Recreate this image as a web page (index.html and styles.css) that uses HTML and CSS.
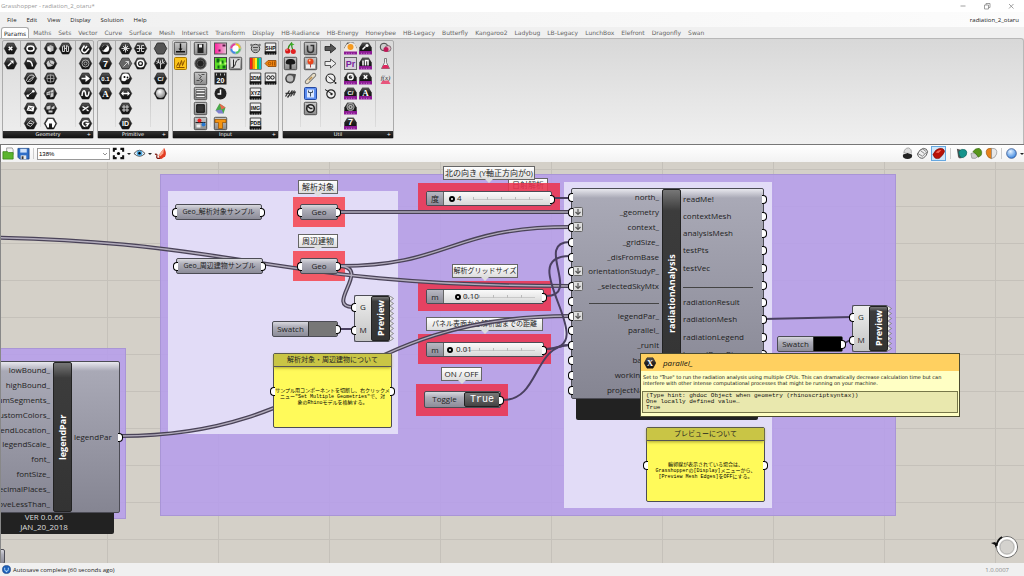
FILE: index.html
```html
<!DOCTYPE html>
<html lang="ja">
<head>
<meta charset="utf-8">
<title>Grasshopper - radiation_2_otaru*</title>
<link rel="stylesheet" href="styles.css">
</head>
<body>
<svg class="defs" aria-hidden="true">
  <defs>
    <linearGradient id="g-hex" x1="0" y1="0" x2="0" y2="1"><stop offset="0" stop-color="#5a5a5a"/><stop offset=".5" stop-color="#222"/><stop offset="1" stop-color="#111"/></linearGradient>
    <linearGradient id="g-box" x1="0" y1="0" x2="0" y2="1"><stop offset="0" stop-color="#c8c8c8"/><stop offset="1" stop-color="#8a8a8a"/></linearGradient>
    <linearGradient id="g-pink" x1="0" y1="0" x2="1" y2="0"><stop offset="0" stop-color="#ff1c9c"/><stop offset="1" stop-color="#e8c4d8"/></linearGradient>
    <radialGradient id="g-ball" cx=".4" cy=".3" r=".7"><stop offset="0" stop-color="#fff"/><stop offset="1" stop-color="#888"/></radialGradient>
    <radialGradient id="g-blue" cx=".4" cy=".3" r=".7"><stop offset="0" stop-color="#e8f4ff"/><stop offset="1" stop-color="#3a86e0"/></radialGradient>
    <symbol id="hex" viewBox="-7.5 -7.5 15 15"><path d="M-6.2 0-3.2-5.5H3.2L6.2 0 3.2 5.5H-3.2z" fill="url(#g-hex)" stroke="#1a1a1a" stroke-width=".6"/></symbol>
    <symbol id="box" viewBox="-7.5 -7.5 15 15"><rect x="-6.2" y="-6.2" width="12.4" height="12.4" rx="1" fill="url(#g-box)" stroke="#444" stroke-width=".9"/></symbol>
    <symbol id="chip" viewBox="-7.5 -7.5 15 15"><path d="M-5.3-5.5H5.3V5.5H-5.3z" fill="#eee" stroke="#333" stroke-width=".9"/><path d="M-5.7 2.8H5.7V6H4.500V5H3.300V6H2.100V5H.9V6H-.3V5H-1.500V6H-2.700V5H-3.900V6H-5.700z" fill="#111"/></symbol>
    <symbol id="dome" viewBox="-7.5 -7.5 15 15"><path d="M-6.200 3V-1L-3.200-6H3.200L6.200-1V3z" fill="url(#g-hex)"/><path d="M-6.500 2.500H6.500V6H-6.500z" fill="#8c1a94"/><path d="M-4 4.200V6M-1.500 4.200V6M1 4.200V6M3.500 4.200V6" stroke="#d58bdc" stroke-width=".6"/></symbol>
  </defs>
</svg>

<header class="titlebar">
  <span class="title">Grasshopper - radiation_2_otaru*</span>
  <div class="window-buttons">
    <button aria-label="Minimize"><svg class="ic" viewBox="0 0 10 10"><path d="M2.500 5H7.500"/></svg></button>
    <button aria-label="Restore"><svg class="ic" viewBox="0 0 10 10"><path d="M2.500 4H6.500V8H2.500zM4 4V2.500H8V6.500H6.500"/></svg></button>
    <button aria-label="Close"><svg class="ic" viewBox="0 0 10 10"><path d="M3 3 7.500 7.500M7.500 3 3 7.500"/></svg></button>
  </div>
</header>

<nav class="menubar">
  <button>File</button><button>Edit</button><button>View</button><button>Display</button><button>Solution</button><button>Help</button>
  <span class="docname">radiation_2_otaru</span>
</nav>

<div class="tabs" role="tablist">
  <button class="active" role="tab">Params</button><button role="tab">Maths</button><button role="tab">Sets</button><button role="tab">Vector</button><button role="tab">Curve</button><button role="tab">Surface</button><button role="tab">Mesh</button><button role="tab">Intersect</button><button role="tab">Transform</button><button role="tab">Display</button><button role="tab">HB-Radiance</button><button role="tab">HB-Energy</button><button role="tab">Honeybee</button><button role="tab">HB-Legacy</button><button role="tab">Butterfly</button><button role="tab">Kangaroo2</button><button role="tab">Ladybug</button><button role="tab">LB-Legacy</button><button role="tab">LunchBox</button><button role="tab">Elefront</button><button role="tab">Dragonfly</button><button role="tab">Swan</button>
</div>

<section class="ribbon">
  <section class="panel">
    <div class="tools">
      <div class="group">
        <button aria-label="Point"><svg viewBox="-7.5 -7.5 15 15"><use href="#hex" x="-7.5" y="-7.5" width="15" height="15"/><path class="s" d="M-1.800-1.800 1.800 1.800M1.800-1.800-1.800 1.800"/></svg></button>
        <button aria-label="Vector"><svg viewBox="-7.5 -7.5 15 15"><use href="#hex" x="-7.5" y="-7.5" width="15" height="15"/><path class="s" d="M-2.500 2.500 1 -1"/><path class="w" d="M3-3V.6L-.6-3z"/></svg></button>
      </div>
      <div class="group">
        <button aria-label="Circle"><svg viewBox="-7.5 -7.5 15 15"><use href="#hex" x="-7.5" y="-7.5" width="15" height="15"/><ellipse class="s" rx="3.500" ry="2.600"/></svg></button>
        <button aria-label="Arc"><svg viewBox="-7.5 -7.5 15 15"><use href="#hex" x="-7.5" y="-7.5" width="15" height="15"/><path class="s" d="M-3-2.500C0-3 1.500-1 2 3"/><path class="s" d="M-3.500-2.500H-2"/></svg></button>
        <button aria-label="Curve"><svg viewBox="-7.5 -7.5 15 15"><use href="#hex" x="-7.5" y="-7.5" width="15" height="15"/><path class="t" d="M-4 2C-2-5 3-4 4-2 1 0 3 3-3 3zM-2 2 3-2"/></svg></button>
        <button aria-label="Line"><svg viewBox="-7.5 -7.5 15 15"><use href="#hex" x="-7.5" y="-7.5" width="15" height="15"/><path class="t" d="M-2.500 2 2.500-2"/><circle class="w" cx="-2.800" cy="2.200" r="1.300"/><circle class="w" cx="2.800" cy="-2.200" r="1.300"/></svg></button>
        <button aria-label="Plane"><svg viewBox="-7.5 -7.5 15 15"><use href="#hex" x="-7.5" y="-7.5" width="15" height="15"/><path class="w" d="M-4 2-2-3 4-2 3 3z"/><path d="M-2 1 2-1M-1-1.500 1 1.500" stroke="#333" stroke-width=".8"/></svg></button>
        <button aria-label="Rectangle"><svg viewBox="-7.5 -7.5 15 15"><use href="#hex" x="-7.5" y="-7.5" width="15" height="15"/><path class="t" d="M-3.500 1 0-3 3.500-1 0 3zM-1.500 0 1.500 0"/></svg></button>
      </div>
      <div class="group">
        <button aria-label="Box"><svg viewBox="-7.5 -7.5 15 15"><use href="#hex" x="-7.5" y="-7.5" width="15" height="15"/><path fill="#bbb" d="M-3-2 0-3.500 3-2V2L0 3.500-3 2z"/><path fill="#eee" d="M-3-2 0-.5V3.500L-3 2z"/></svg></button>
        <button aria-label="Brep"><svg viewBox="-7.5 -7.5 15 15"><use href="#hex" x="-7.5" y="-7.5" width="15" height="15"/><path fill="#ccc" d="M-4 0C-3-4 2-4 4-1 3 3-1 4-3 3z"/><path d="M-1-3C-1 0 0 1 3 1" fill="none" stroke="#555"/></svg></button>
        <button aria-label="Mesh"><svg viewBox="-7.5 -7.5 15 15"><use href="#hex" x="-7.5" y="-7.5" width="15" height="15"/><path d="M-3-3Q0-4 3-3 4 0 3 3 0 4-3 3-4 0-3-3zM0-4V4M-4 0H4" fill="none" stroke="#aaa" stroke-width=".8"/></svg></button>
        <button aria-label="Surface"><svg viewBox="-7.5 -7.5 15 15"><use href="#hex" x="-7.5" y="-7.5" width="15" height="15"/><path fill="#ccc" d="M-4-1 3-4V3L0 4-1 1-4 2z"/><path d="M0-2V3M-3 0 3-1" stroke="#555" stroke-width=".7"/></svg></button>
        <button aria-label="Twisted Box"><svg viewBox="-7.5 -7.5 15 15"><use href="#hex" x="-7.5" y="-7.5" width="15" height="15"/><path fill="#ccc" d="M-4-2 0-3V0L-1 1-4 1zM1-1 4-3V0L1 1zM-2 2H2V4H-2z"/></svg></button>
        <button aria-label="Geometry"><svg viewBox="-7.5 -7.5 15 15"><use href="#hex" x="-7.5" y="-7.5" width="15" height="15"/><path class="w" d="M-5 0-2-4.500H2L5 0 3 4H1.500V0H-1.500V4H-3z"/></svg></button>
        <button aria-label="Group"><svg viewBox="-7.5 -7.5 15 15"><use href="#hex" x="-7.5" y="-7.5" width="15" height="15"/><path class="t" d="M-3 3V-2L-1-3V3M1 3V-3L3-2V3M-3 3H-1M1 3H3M-1 0H1"/></svg></button>
      </div>
      <div class="group">
        <button aria-label="Pipeline"><svg viewBox="-7.5 -7.5 15 15"><use href="#hex" x="-7.5" y="-7.5" width="15" height="15"/><path class="s" d="M-1-3-3 0A2.500 2.500 0 0 0 1 3L3.500 0M-.5 0 1.500-2.500"/></svg></button>
        <button aria-label="Spiral"><svg viewBox="-7.5 -7.5 15 15"><use href="#hex" x="-7.5" y="-7.5" width="15" height="15"/><circle r="3.500" fill="none" stroke="#aaa"/><circle r="1.500" fill="none" stroke="#aaa"/></svg></button>
        <button aria-label="Transform"><svg viewBox="-7.5 -7.5 15 15"><use href="#hex" x="-7.5" y="-7.5" width="15" height="15"/><path class="s" d="M-4 0H3"/><path class="w" d="M0-3.500 4.500 0 0 3.500z"/></svg></button>
        <button aria-label="Field"><svg viewBox="-7.5 -7.5 15 15"><use href="#hex" x="-7.5" y="-7.5" width="15" height="15"/><path class="s" d="M-3.500 2.500C-3-5 0-3 0 0S3 5 3.500-2"/></svg></button>
        <button aria-label="Cloud"><svg viewBox="-7.5 -7.5 15 15"><use href="#hex" x="-7.5" y="-7.5" width="15" height="15"/><path class="s" d="M-3-2 0 0-3 2M0 0 3-2M1 1 3 2.500"/></svg></button>
        <button aria-label="Settings"><svg viewBox="-7.5 -7.5 15 15"><use href="#hex" x="-7.5" y="-7.5" width="15" height="15"/><path class="s" d="M3-2C0-4-3-2-3 0S-1 3 0 3M0 0H3L1 3"/></svg></button>
      </div>
    </div>
    <h2>Geometry<span>+</span></h2>
  </section>

  <section class="panel">
    <div class="tools">
      <div class="group">
        <button aria-label="Boolean"><svg viewBox="-7.5 -7.5 15 15"><use href="#hex" x="-7.5" y="-7.5" width="15" height="15"/><circle class="w" r="3.600"/><path d="M-2.500 2.500A3 3 0 0 1 2-2.500z" fill="#222"/></svg></button>
        <button aria-label="Integer"><svg viewBox="-7.5 -7.5 15 15"><use href="#hex" x="-7.5" y="-7.5" width="15" height="15"/><text class="g" y="3">7</text></svg></button>
        <button aria-label="Number"><svg viewBox="-7.5 -7.5 15 15"><use href="#hex" x="-7.5" y="-7.5" width="15" height="15"/><text class="g small" y="2.500">0.1</text></svg></button>
        <button aria-label="Text"><svg viewBox="-7.5 -7.5 15 15"><use href="#hex" x="-7.5" y="-7.5" width="15" height="15"/><text class="g serif" y="3.300">A</text></svg></button>
      </div>
      <div class="group">
        <button aria-label="Colour"><svg viewBox="-7.5 -7.5 15 15"><use href="#hex" x="-7.5" y="-7.5" width="15" height="15"/><circle class="w" r="2"/><path class="t" d="M0-4V4M-4 0H4M-2.500-2.500 2.500 2.500M2.500-2.500-2.500 2.500"/></svg></button>
        <button aria-label="Domain"><svg viewBox="-7.5 -7.5 15 15"><use href="#hex" x="-7.5" y="-7.5" width="15" height="15"/><path d="M-6 0-3-5H3L6 0 3 5H-3z" fill="#666"/><path class="t" d="M-2 3 3-2M0-2H3V1"/></svg></button>
        <button aria-label="Matrix"><svg viewBox="-7.5 -7.5 15 15"><use href="#hex" x="-7.5" y="-7.5" width="15" height="15"/><path class="w" d="M-4-1A4 4 0 0 1 4-1 3 3 0 0 1 1 1Q0 4-4 2z"/><circle cx="-1" cy="-1.500" r="1"/><circle cx="2" cy="-1" r=".9"/></svg></button>
        <button aria-label="Range"><svg viewBox="-7.5 -7.5 15 15"><use href="#hex" x="-7.5" y="-7.5" width="15" height="15"/><path class="s" d="M-3 0H3"/><path class="w" d="M-4.500 0-2-2.500V2.500zM4.500 0 2-2.500V2.500z"/></svg></button>
        <button aria-label="Grid"><svg viewBox="-7.5 -7.5 15 15"><use href="#hex" x="-7.5" y="-7.5" width="15" height="15"/><path class="t" d="M-1.500-3.500V3.500M1.500-3.500V3.500M-3.500-1.500H3.500M-3.500 1.500H3.500"/></svg></button>
        <button aria-label="Guid"><svg viewBox="-7.5 -7.5 15 15"><use href="#hex" x="-7.5" y="-7.5" width="15" height="15"/><text class="g medium" y="2.800">ID</text></svg></button>
        <button aria-label="Table"><svg viewBox="-7.5 -7.5 15 15"><use href="#hex" x="-7.5" y="-7.5" width="15" height="15"/><path class="t" d="M-3.500-3H-1V3H-3.500M3.500-3H1V3H3.500M-4 0H4"/></svg></button>
        <button aria-label="Time"><svg viewBox="-7.5 -7.5 15 15"><use href="#hex" x="-7.5" y="-7.5" width="15" height="15"/><circle class="s" r="3.300"/><circle class="w" r="1.200"/></svg></button>
      </div>
      <div class="group">
        <button aria-label="Data"><svg viewBox="-7.5 -7.5 15 15"><path d="M-6.200 0-3.200-5.500H3.200L6.200 0 3.200 5.500H-3.200z" fill="#555" stroke="#333"/></svg></button>
        <button aria-label="Data Path"><svg viewBox="-7.5 -7.5 15 15"><use href="#hex" x="-7.5" y="-7.5" width="15" height="15"/><path class="t" d="M0 5V0L-4-2M0 1 4-2M-2-1V-4M2-1V-4M-4 0-2-1M4 0 2-1M0 0V-3"/></svg></button>
        <button aria-label="File Path"><svg viewBox="-7.5 -7.5 15 15"><use href="#hex" x="-7.5" y="-7.5" width="15" height="15"/><text class="g small" y="2.500">C/</text></svg></button>
        <button aria-label="Shader"><svg viewBox="-7.5 -7.5 15 15"><use href="#hex" x="-7.5" y="-7.5" width="15" height="15"/><circle r="4.600" fill="url(#g-ball)"/></svg></button>
      </div>
    </div>
    <h2>Primitive<span>+</span></h2>
  </section>

  <section class="panel">
    <div class="tools">
      <div class="group">
        <button aria-label="Button"><svg viewBox="-7.5 -7.5 15 15"><use href="#box" x="-7.5" y="-7.5" width="15" height="15"/><path d="M-.7-5H.7V0H2L0 2.500-2 0H-.7zM-4.500 2.500H4.500V4H-4.500z" fill="#111"/></svg></button>
        <button aria-label="Graph Mapper"><svg viewBox="-7.5 -7.5 15 15"><rect x="-6" y="-6" width="12" height="12" rx="1" fill="#fcc419" stroke="#a97800"/><path d="M-4 3-2-1-1 3 1-3 2 2 4-3M-4 4H4" fill="none" stroke="#8a5200"/></svg></button>
      </div>
      <div class="group">
        <button aria-label="Boolean Toggle"><svg viewBox="-7.5 -7.5 15 15"><use href="#box" x="-7.5" y="-7.5" width="15" height="15"/><path d="M-3-4.500H3V4.500H-3z" fill="#222"/><path d="M-1.500-4H1.500V-1H-1.500z" fill="#eee"/></svg></button>
        <button aria-label="Control Knob"><svg viewBox="-7.5 -7.5 15 15"><circle r="5.700" fill="#333" stroke="#777"/><circle r="3.500" fill="#222" stroke="#555"/></svg></button>
        <button aria-label="Digit Scroller"><svg viewBox="-7.5 -7.5 15 15"><use href="#box" x="-7.5" y="-7.5" width="15" height="15"/><path d="M-2-4 1-2-1 0 2 2 0 4M-4 2H-1M1-4H4" fill="none" stroke="#333" stroke-width=".8"/></svg></button>
        <button aria-label="Value List"><svg viewBox="-7.5 -7.5 15 15"><use href="#box" x="-7.5" y="-7.5" width="15" height="15"/><path d="M-4.500-4H4.500V-2H-4.500zM-4.500-1H4.500V1H-4.500zM-4.500 2H4.500V4H-4.500z" fill="#eee" stroke="#333" stroke-width=".6"/></svg></button>
        <button aria-label="MD Slider"><svg viewBox="-7.5 -7.5 15 15"><use href="#box" x="-7.5" y="-7.5" width="15" height="15"/><path d="M-3.800-3.800H3.800V3.800H-3.800z" fill="#333" stroke="#111"/></svg></button>
        <button aria-label="Number Slider"><svg viewBox="-7.5 -7.5 15 15"><use href="#box" x="-7.5" y="-7.5" width="15" height="15"/><path d="M-5-1H5" stroke="#222"/><circle cx="-1" cy="-3" r="2" fill="#e22"/><circle cx="3" cy="1" r="2" fill="#2878d0"/><path d="M-4 1H0V4H-4z" fill="#eee"/></svg></button>
      </div>
      <div class="group">
        <button aria-label="Gradient"><svg viewBox="-7.5 -7.5 15 15"><rect x="-6" y="-5.500" width="12" height="11" fill="url(#g-pink)" stroke="#555"/><path d="M2-4H5V-2H2zM-2 1H0V3H-2z" fill="#5b1848"/></svg></button>
        <button aria-label="Image Sampler"><svg viewBox="-7.5 -7.5 15 15"><rect x="-6" y="-6" width="12" height="12" fill="#5cdc28" stroke="#444"/><path d="M-4-5H-1V-1H-4zM1-3H3V0H1zM-3 2H-1V5H-3zM2 2H5V5H2z" fill="#0c6a12"/><path d="M-1-2H1V1H-1zM4-1H6V1H4z" fill="#c8ff80"/></svg></button>
        <button aria-label="Calendar"><svg viewBox="-7.5 -7.5 15 15"><rect x="-6" y="-6" width="12" height="12" fill="#222"/><path d="M-4-5V-3M0-5V-3M4-5V-3" stroke="#bbb"/><text class="g medium" y="4.500">20</text></svg></button>
        <button aria-label="Clock"><svg viewBox="-7.5 -7.5 15 15"><circle r="6" fill="#222"/><path class="s" d="M0-4V0.500H-3"/></svg></button>
        <button aria-label="Colour Picker"><svg viewBox="-7.5 -7.5 15 15"><path d="M-5 2-1-5 5-1 3 5z" fill="#4aa84a"/><path d="M-1-5 5-1 1 1z" fill="#e86a50"/><path d="M-5 2 1 1 3 5-2 5z" fill="#8080d0"/></svg></button>
        <button aria-label="Panel"><svg viewBox="-7.5 -7.5 15 15"><use href="#box" x="-7.5" y="-7.5" width="15" height="15"/><path d="M-5.500-4H5.500V-1H2V5H-2V-1H-5.500z" fill="#f59410" stroke="#9a5200" stroke-width=".7"/></svg></button>
        <button aria-label="Colour Wheel"><svg viewBox="-7.5 -7.5 15 15"><circle r="5.400" fill="#fff" stroke="#777" stroke-width=".6"/><g fill="none" stroke-width="2"><path d="M0-4.200A4.200 4.200 0 0 1 4.200 0" stroke="#f0c020"/><path d="M4.200 0A4.200 4.200 0 0 1 0 4.200" stroke="#4cc860"/><path d="M0 4.200A4.200 4.200 0 0 1-4.200 0" stroke="#4088e8"/><path d="M-4.200 0A4.200 4.200 0 0 1 0-4.200" stroke="#e040a0"/></g></svg></button>
        <button aria-label="Graph"><svg viewBox="-7.5 -7.5 15 15"><use href="#box" x="-7.5" y="-7.5" width="15" height="15"/><path d="M-4.500-4.500H4.500V4.500H-4.500z" fill="#ddd"/><path d="M-4 4C2 4-2-4 4-4M-2-4V4" fill="none" stroke="#222"/></svg></button>
      </div>
      <div class="group">
        <button aria-label="Atom"><svg viewBox="-7.5 -7.5 15 15"><circle r="4.200" fill="#bbb" stroke="#444"/><circle cx="-4" cy="-3.500" r="1.300" fill="#777"/><circle cx="4" cy="-3.500" r="1.300" fill="#777"/><path d="M-2.500-1H2.500M-2 1.500H2" stroke="#333" stroke-width=".8"/></svg></button>
        <button aria-label="Palette"><svg viewBox="-7.5 -7.5 15 15"><path d="M-6-6H6V6H-6z" fill="#222"/><path d="M-5.500-5.500H-3V5.500H-5.500z" fill="#e22"/><path d="M-3-5.500H-.5V5.500H-3z" fill="#f90"/><path d="M-.5-5.500H1.500V5.500H-.5z" fill="#fe2"/><path d="M1.500-5.500H3.500V5.500H1.500z" fill="#2b4"/><path d="M3.500-5.500H5.500V5.500H3.500z" fill="#1bc"/></svg></button>
        <button aria-label="Import 3DM"><svg viewBox="-7.5 -7.5 15 15"><use href="#chip" x="-7.5" y="-7.5" width="15" height="15"/><text class="c" y="1">3DM</text></svg></button>
        <button aria-label="Import Coordinates"><svg viewBox="-7.5 -7.5 15 15"><use href="#chip" x="-7.5" y="-7.5" width="15" height="15"/><text class="c" y="1">XYZ</text></svg></button>
        <button aria-label="Import Image"><svg viewBox="-7.5 -7.5 15 15"><use href="#chip" x="-7.5" y="-7.5" width="15" height="15"/><text class="c" y="1">IMG</text></svg></button>
        <button aria-label="Import PDB"><svg viewBox="-7.5 -7.5 15 15"><use href="#chip" x="-7.5" y="-7.5" width="15" height="15"/><text class="c" y="1">PDB</text></svg></button>
        <button aria-label="Import SHP"><svg viewBox="-7.5 -7.5 15 15"><use href="#chip" x="-7.5" y="-7.5" width="15" height="15"/><text class="c" y="1">SHP</text></svg></button>
        <button aria-label="Tag"><svg viewBox="-7.5 -7.5 15 15"><path d="M-5.500 0-2.500-3H5.500V3H-2.500z" fill="#f08410" stroke="#8a4200" stroke-width=".8"/><circle cx="-1" r="1.300" fill="none" stroke="#8a4200" stroke-width=".7"/><path d="M2-2V2M4-2V2" stroke="#8a4200" stroke-width=".7"/></svg></button>
        <button aria-label="Read File"><svg viewBox="-7.5 -7.5 15 15"><use href="#chip" x="-7.5" y="-7.5" width="15" height="15"/><circle cx="-2" cy="-1" r="1.700" fill="none" stroke="#111"/><circle cx="2" cy="-1" r="1.700" fill="none" stroke="#111"/></svg></button>
      </div>
    </div>
    <h2>Input<span>+</span></h2>
  </section>

  <section class="panel">
    <div class="tools">
      <div class="group">
        <button aria-label="Cherry Picker"><svg viewBox="-7.5 -7.5 15 15"><path d="M-2.500 1Q-2-3 1-5.500 1-1 2.500 2" fill="none" stroke="#2f8a1d" stroke-width="1.200"/><path d="M1-5.500 4-4 0-2.500z" fill="#3eb427"/><circle cx="-2.800" cy="2.500" r="2.600" fill="#d81818"/><circle cx="2.800" cy="3" r="2.500" fill="#e22222"/><circle cx="-3.500" cy="1.500" r=".8" fill="#fbb"/></svg></button>
        <button aria-label="Param Viewer"><svg viewBox="-7.5 -7.5 15 15"><use href="#box" x="-7.5" y="-7.5" width="15" height="15"/><path d="M-1 5.500V1Q-6 1-4.500-2-4-5 0-4.500 4-5 4.500-2 6 1 1 1V5.500z" fill="#181818"/></svg></button>
        <button aria-label="Fitness Landscape"><svg viewBox="-7.5 -7.5 15 15"><path d="M-5 0Q-4-5 0-4.500L5-4 4 1Q3 5-1 4.500-5 4-5 0z" fill="#555" stroke="#222" stroke-width=".6"/><circle cx="-.5" r="3.200" fill="#bbb"/></svg></button>
        <button aria-label="Galapagos"><svg viewBox="-7.5 -7.5 15 15"><path d="M-5 3-1-3M-3 4 2-3M0 3 4-3M3 2 5-2M-5 0 5-1" stroke="#333" stroke-width="1.300"/></svg></button>
      </div>
      <div class="group">
        <button aria-label="Data Recorder"><svg viewBox="-7.5 -7.5 15 15"><use href="#box" x="-7.5" y="-7.5" width="15" height="15"/><path d="M-3-3V1A3 3 0 0 0 3 1V-3H0" fill="none" stroke="#333" stroke-width="1.600"/></svg></button>
        <button aria-label="Record"><svg viewBox="-7.5 -7.5 15 15"><use href="#box" x="-7.5" y="-7.5" width="15" height="15"/><path d="M-4.500 1H4.500V5H-4.500z" fill="#eee"/><path d="M0 0V4" stroke="#a44"/><circle cy="-2" r="3" fill="#e8451c"/><circle cx="-.8" cy="-3" r=".9" fill="#fc9"/></svg></button>
        <button aria-label="Relay"><svg viewBox="-7.5 -7.5 15 15"><path d="M-3.500 3.500 3.500-3.500" stroke="#555" stroke-width="4.400" stroke-linecap="round"/><path d="M-3.500 3.500 3.500-3.500" stroke="#e6dcc6" stroke-width="3" stroke-linecap="round"/><path d="M-1.500 1.500 1.500-1.500" stroke="#b98b4a" stroke-width="1.500"/></svg></button>
        <button aria-label="Suirify"><svg viewBox="-7.5 -7.5 15 15"><rect x="-6" y="-6" width="12" height="12" rx="1" fill="#5c8ef0" stroke="#2448a0"/><path d="M-3.500-4H3.500V4H-3.500z" fill="#dce8ff"/><path d="M-2-3V-1H2V-3M0-1V3" fill="none" stroke="#456"/></svg></button>
        <button aria-label="Timer"><svg viewBox="-7.5 -7.5 15 15"><use href="#box" x="-7.5" y="-7.5" width="15" height="15"/><circle r="3.800" fill="#ddd" stroke="#222" stroke-width="1.600"/><path d="M-4-3 0 0H2" fill="none" stroke="#222" stroke-width="1.300"/></svg></button>
      </div>
      <div class="group">
        <button aria-label="Data Output"><svg viewBox="-7.5 -7.5 15 15"><path d="M-5.500-2H0V-4.500L5.500 0 0 4.500V2H-5.500z" fill="#555" stroke="#222" stroke-width=".8"/></svg></button>
        <button aria-label="Data Input"><svg viewBox="-7.5 -7.5 15 15"><path d="M-5.500-2H0V-4.500L5.500 0 0 4.500V2H-5.500z" fill="#eee" stroke="#444" stroke-width=".9"/></svg></button>
        <button aria-label="Jump"><svg viewBox="-7.5 -7.5 15 15"><circle r="4.500" fill="#eee" stroke="#222" stroke-width="1.200"/><path d="M-2-2 5 4" stroke="#222"/><circle cx="5" cy="4.500" r="1" fill="#222"/></svg></button>
        <button aria-label="Trigger"><svg viewBox="-7.5 -7.5 15 15"><circle cx=".5" cy=".5" r="4.200" fill="#eee" stroke="#222" stroke-width="1.200"/><path d="M-5.500-4 1 0" stroke="#222"/><circle cx="1" cy=".5" r="1.200" fill="#222"/></svg></button>
      </div>
      <div class="group">
        <button aria-label="Sun"><svg viewBox="-7.5 -7.5 15 15"><use href="#dome" x="-7.5" y="-7.5" width="15" height="15"/><path d="M-6.500 3V0L-4-4 0-6 4-5 6.500 0V3z" fill="#efe8e0"/><circle cy="-1.500" r="3" fill="#f59a20"/></svg></button>
        <button aria-label="Premium"><svg viewBox="-7.5 -7.5 15 15"><rect x="-6" y="-6" width="12" height="12" fill="#d8d0dc" stroke="#666"/><text class="g pr" y="3.500">Pr</text></svg></button>
        <button aria-label="Get Boolean"><svg viewBox="-7.5 -7.5 15 15"><use href="#dome" x="-7.5" y="-7.5" width="15" height="15"/><circle class="s" cy="-1.500" r="2.600"/><path class="t" d="M0-1.500 2-3"/></svg></button>
        <button aria-label="Get Path"><svg viewBox="-7.5 -7.5 15 15"><use href="#dome" x="-7.5" y="-7.5" width="15" height="15"/><text class="g small" y="1.500">C/</text></svg></button>
        <button aria-label="Get Time"><svg viewBox="-7.5 -7.5 15 15"><use href="#dome" x="-7.5" y="-7.5" width="15" height="15"/><circle cy="-1.500" r="3.600" fill="#555" stroke="#aaa"/><circle class="t" cy="-1.500" r="1.600"/></svg></button>
        <button aria-label="Get Integer"><svg viewBox="-7.5 -7.5 15 15"><use href="#dome" x="-7.5" y="-7.5" width="15" height="15"/><text class="g" y="1.800">7</text></svg></button>
        <button aria-label="Get Vector"><svg viewBox="-7.5 -7.5 15 15"><use href="#dome" x="-7.5" y="-7.5" width="15" height="15"/><path class="s" d="M-3 1 0-2"/><circle class="w" cx="1.500" cy="-3" r="1.600"/></svg></button>
        <button aria-label="Get Number"><svg viewBox="-7.5 -7.5 15 15"><use href="#dome" x="-7.5" y="-7.5" width="15" height="15"/><path class="s" d="M-2.500 2V-3M0 2V-3H2.500V2"/></svg></button>
        <button aria-label="Get Point"><svg viewBox="-7.5 -7.5 15 15"><use href="#dome" x="-7.5" y="-7.5" width="15" height="15"/><path class="s" d="M-1.800-3.300 1.800.3M1.800-3.300-1.800.3"/></svg></button>
        <button aria-label="Get Text"><svg viewBox="-7.5 -7.5 15 15"><use href="#dome" x="-7.5" y="-7.5" width="15" height="15"/><text class="g serif" y="2">A</text></svg></button>
      </div>
      <div class="group">
        <button aria-label="Cluster"><svg viewBox="-7.5 -7.5 15 15"><circle cx="-1.500" cy="-1.500" r="3.800" fill="#ccc" stroke="#444"/><circle cx="2.500" cy="0" r="3" fill="#e8b0c4" stroke="#555" stroke-width=".7"/><circle cx=".5" cy="1" r="2.500" fill="#c01858"/></svg></button>
        <button aria-label="Experiment"><svg viewBox="-7.5 -7.5 15 15"><path d="M-1-5H1V-1L4 5H-4L-1-1z" fill="#eee" stroke="#666" stroke-width=".8"/><path d="M-2 1.500H2L4 5H-4z" fill="#e02860"/></svg></button>
        <button aria-label="Expression"><svg viewBox="-7.5 -7.5 15 15"><path d="M-3 2H3L5 5.500H-5z" fill="#e8557c"/><text class="fx" y="1">f(x)</text></svg></button>
      </div>
    </div>
    <h2>Util<span>+</span></h2>
  </section>
</section>

<div class="toolbar">
  <button aria-label="Open"><svg class="ic" viewBox="0 0 14 14"><path d="M5 1H11L12 3V8H5z" fill="#f4f4f4" stroke="#777" stroke-width=".7"/><path d="M1 5H6L7 6H12V13H1z" fill="#5cb52e" stroke="#358012" stroke-width=".8"/></svg></button>
  <button aria-label="Save"><svg class="ic" viewBox="0 0 14 14"><path d="M1 1.500H13V13H3L1 11z" fill="#2f6fc8" stroke="#17407f" stroke-width=".8"/><path d="M3.500 2H10.500V6H3.500z" fill="#cfe2fb"/><path d="M4 9H10V13H4z" fill="#e8e8e8"/><path d="M5 10H7V13H5z" fill="#333"/></svg></button>
  <i class="sep tight"></i>
  <select aria-label="Zoom"><option>138%</option></select>
  <button class="fit" aria-label="Zoom extents"><svg class="ic" viewBox="0 0 14 14"><path d="M2 5V2H5M9 2H12V5M12 9V12H9M5 12H2V9" fill="none" stroke="#111" stroke-width="2.200"/><circle cx="7" cy="7" r="1.700"/></svg></button>
  <i class="caret"></i>
  <button aria-label="Preview"><svg class="ic" viewBox="0 0 14 14"><path d="M1 7Q7 0 13 7 7 13 1 7z" fill="#eaf6ff" stroke="#444"/><circle cx="7" cy="6.800" r="3" fill="#4da6dd"/><circle cx="7" cy="6.800" r="1.300"/></svg></button>
  <i class="caret"></i>
  <button aria-label="Sketch"><svg class="ic" viewBox="0 0 14 14"><path d="M5 9 11 1Q14 7 12 10L8 13 6 12z" fill="#e23c22"/><path d="M5 9 11 1 10 7 7 10z" fill="#f9a58a"/><path d="M1 8Q4 7 3 10 2 13 7 12" fill="none" stroke="#7c1a10" stroke-width="1.300"/></svg></button>
  <span class="spring"></span>
  <button aria-label="No preview"><svg class="ic" viewBox="0 0 14 14"><path d="M3 6Q4 1 8 1 12 2 11 7z" fill="#ddd" stroke="#888" stroke-width=".7"/><ellipse cx="7" cy="9.500" rx="5" ry="3.400" fill="#222"/><path d="M2.500 7.500Q7 4.500 11.500 7.500" stroke="#eee" fill="none"/></svg></button>
  <button aria-label="Wireframe preview"><svg class="ic" viewBox="0 0 14 14"><path d="M1.500 7.500Q4 2 8 1.500 12 1.500 12.500 5 12 9 8 12 3 13 1.500 7.500z" fill="#eee" stroke="#555"/><path d="M2 7 7 10 12 5M5 4 9 7M7 2 11 5" fill="none" stroke="#666" stroke-width=".8"/></svg></button>
  <button class="on" aria-label="Shaded preview"><svg class="ic" viewBox="0 0 14 14"><path d="M1 8Q4 2 8 1.500 13 1 13.500 5 12 9 8 12 3 14 1 8z" fill="#b81208" stroke="#6c0500" stroke-width=".6"/><path d="M4 6Q7 2.500 10 3.500L7 6.500z" fill="#f0685a"/></svg></button>
  <i class="sep"></i>
  <button aria-label="Preview selected"><svg class="ic" viewBox="0 0 14 14"><path d="M2 2 6 3 7 12Q3 13 3 8z" fill="#555"/><path d="M4 5Q7 1 11 3 14 5 12 9 9 13 6 11 4 9 4 5z" fill="#15948c" stroke="#075650" stroke-width=".6"/></svg></button>
  <button aria-label="Preview mesh"><svg class="ic" viewBox="0 0 14 14"><path d="M1 7Q5 5 9 10 6 13.500 2 12z" fill="#ccc" stroke="#777" stroke-width=".6"/><path d="M3 5Q6 1 10 1.500 14 4 12 9L9 11Q7 7 3 5z" fill="#57961a" stroke="#2c5c08" stroke-width=".6"/></svg></button>
  <button aria-label="Document preview settings"><svg class="ic" viewBox="0 0 14 14"><path d="M7 1.500Q0 1 1.500 7.500 3 12 7 12.500z" fill="#e8821a" stroke="#8a4a08" stroke-width=".6"/><path d="M7 1.500Q14 1 12.500 7.500 11 12 7 12.500z" fill="#e8e8e8" stroke="#777" stroke-width=".6"/></svg></button>
  <i class="sep tight"></i>
  <button aria-label="Preview quality"><svg class="ic" viewBox="0 0 14 14"><circle cx="7" cy="7" r="5.200" fill="url(#g-blue)" stroke="#2a4a88" stroke-width=".8"/></svg></button>
  <i class="caret"></i>
</div>

<main class="canvas">
  <div class="area outer a-left"></div>
  <div class="area outer a-main"></div>
  <div class="area inner a-geo"></div>
  <div class="area inner a-rad"></div>

  <div class="balloon b-sun">日射解析</div>
  <div class="area red r-geo1"></div>
  <div class="area red r-geo2"></div>
  <div class="area crimson r-north"></div>
  <div class="area crimson r-grid"></div>
  <div class="area crimson r-dist"></div>
  <div class="area crimson r-run"></div>

  <div class="balloon tip b-geo1">解析対象</div>
  <div class="balloon tip b-geo2">周辺建物</div>
  <div class="balloon tip b-north">北の向き (Y軸正方向が0)</div>
  <div class="balloon tip kana b-grid">解析グリッドサイズ</div>
  <div class="balloon tip kana b-dist">パネル表面から解析面までの距離</div>
  <div class="balloon tip b-run">ON / OFF</div>

  <svg class="wires" viewBox="0 162 1024 401" aria-hidden="true">
    <defs>
      <g id="double">
        <path d="M-60 237C250 237 250 286 570 286"/>
        <path d="M339 212H570"/>
        <path d="M340 266C450 266 450 227 570 227"/>
        <path d="M340 266C372 268 324 307 353 307"/>
        <path d="M121 436C330 436 350 316 570 316"/>
      </g>
    </defs>
    <use href="#double" class="wire-out"/>
    <use href="#double" class="wire-in"/>
    <g class="wire">
      <path d="M339 329H354"/>
      <path d="M553 198H570"/>
      <path d="M546 296C582 296 534 242 570 242"/>
      <path d="M546 349C606 349 510 256 570 256"/>
      <path d="M546 349C556 349 560 345 570 345"/>
      <path d="M503 400C540 400 533 345 570 345"/>
      <path d="M764 319 852 317"/>
      <path d="M843 344 852 339"/>
    </g>
  </svg>

  <div class="node capsule kana io n-geo-s1">Geo_解析対象サンプル</div>
  <div class="node capsule kana io n-geo-s2">Geo_周辺建物サンプル</div>
  <div class="node capsule io n-geo1">Geo</div>
  <div class="node capsule io n-geo2">Geo</div>

  <div class="node preview n-prev1"><ul><li>G</li><li>M</li></ul><b class="core">Preview</b></div>
  <div class="node preview n-prev2"><ul><li>G</li><li>M</li></ul><b class="core">Preview</b></div>

  <div class="node swatch out n-sw1"><span>Swatch</span><button class="gray" aria-label="Swatch colour"></button></div>
  <div class="node swatch out n-sw2"><span>Swatch</span><button class="black" aria-label="Swatch colour"></button></div>

  <div class="node slider out n-north"><label for="north">度</label><div class="rail"><input id="north" type="range" value="3"><output for="north" style="left:13px">4</output></div></div>
  <div class="node slider out n-grid"><label for="grid">m</label><div class="rail"><input id="grid" type="range" value="10"><output for="grid" style="left:19px">0.10</output></div></div>
  <div class="node slider out n-dist"><label for="dist">m</label><div class="rail"><input id="dist" type="range" value="1"><output for="dist" style="left:12px">0.01</output></div></div>

  <div class="node toggle out n-run"><span>Toggle</span><button>True</button></div>

  <div class="foot f-rad"></div>
  <div class="node component n-rad">
    <ul class="inputs">
      <li>north_</li><li class="down">_geometry</li><li class="down">context_</li><li>_gridSize_</li><li>_disFromBase</li><li class="down">orientationStudyP_</li><li class="down">_selectedSkyMtx</li><li class="rule"></li><li class="down">legendPar_</li><li>parallel_</li><li>_runIt</li><li>bakeIt_</li><li>workingDir_</li><li>projectName_</li>
    </ul>
    <b class="core">radiationAnalysis</b>
    <ul class="outputs">
      <li>readMe!</li><li>contextMesh</li><li>analysisMesh</li><li>testPts</li><li>testVec</li><li class="rule"></li><li>radiationResult</li><li>radiationMesh</li><li>radiationLegend</li><li>legendBasePt</li><li></li><li></li>
    </ul>
  </div>

  <div class="foot f-leg">VER 0.0.66<br>JAN_20_2018</div>
  <div class="node component n-leg">
    <ul class="inputs">
      <li>lowBound_</li><li>highBound_</li><li>numSegments_</li><li>customColors_</li><li>legendLocation_</li><li>legendScale_</li><li>font_</li><li>fontSize_</li><li>decimalPlaces_</li><li>removeLessThan_</li>
    </ul>
    <b class="core">legendPar</b>
    <ul class="outputs"><li>legendPar</li></ul>
  </div>
  <div class="node stub"></div>

  <div class="node note io n-note1"><h3>解析対象・周辺建物について</h3><p>サンプル用コンポーネントを切断し、右クリックメ<br>ニュー"Set Multiple Geometries"で、対<br>象のRhinoモデルを格納する。</p></div>
  <div class="node note io n-note2"><h3>プレビューについて</h3><p>輪郭線が表示されている場合は、<br>Grasshopperの[Display]メニューから、<br>[Preview Mesh Edges]をOFFにする。</p></div>

  <aside class="tooltip" role="tooltip">
    <header><svg viewBox="-7.5 -7.5 15 15"><use href="#hex" x="-7.5" y="-7.5" width="15" height="15"/><text class="g serif" y="3">X</text></svg><em>parallel_</em></header>
    <p>Set to "True" to run the radiation analysis using multiple CPUs. This can dramatically decrease calculation time but can<br>interfere with other intense computational processes that might be running on your machine.</p>
    <pre>(Type hint: ghdoc Object when geometry (rhinoscriptsyntax))
One locally defined value…
True</pre>
  </aside>

  <svg class="compass" viewBox="0 0 28 24" aria-hidden="true"><circle cx="16" cy="12" r="10.500" fill="#e2e0dc" stroke="#666"/><circle cx="16" cy="12" r="9" fill="none" stroke="#fff" stroke-width="2"/><circle cx="16" cy="12" r="7" fill="#d4d2ce" stroke="#aaa" stroke-width=".8"/><path d="M5.500 11Q6 5 11 2" fill="none" stroke="#111" stroke-width="1.800"/><path d="M0 8 4 7 6 9 4 13 4 10z" fill="#111"/></svg>
</main>

<footer class="status"><svg viewBox="0 0 10 10"><circle cx="5" cy="5" r="4.500" fill="#1d5fb8" stroke="#123a78" stroke-width=".6"/><path d="M3 3V5A2 2 0 0 0 7 5V3M5 6.500V8" fill="none" stroke="#bfe6ff"/></svg><span>Autosave complete (60 seconds ago)</span><span class="version">1.0.0007</span></footer>
</body>
</html>
```
FILE: styles.css
```css
* { box-sizing: border-box; }

body {
  margin: 0;
  height: 100vh;
  display: flex;
  flex-direction: column;
  overflow: hidden;
  background: #f0f0f0;
  font-family: "Open Sans", "Noto Sans CJK JP", sans-serif;
  font-size: 6px;
  color: #222;
}

button {
  margin: 0;
  padding: 0;
  border: 0;
  background: none;
  font: inherit;
  color: inherit;
}

ul, h2, h3, p, pre { margin: 0; padding: 0; list-style: none; font-weight: normal; }
.defs { position: absolute; width: 0; height: 0; }

/* Title, menu, tabs */
.titlebar {
  flex: none;
  display: flex;
  justify-content: space-between;
  align-items: center;
  height: 12px;
  padding-left: 1px;
  background: #fff;
  color: #999;
}
.window-buttons { display: flex; gap: 14px; padding-right: 8px; }
.window-buttons button { display: flex; }
.window-buttons .ic { width: 10px; height: 10px; fill: none; stroke: #888; stroke-width: .8; }

.menubar {
  flex: none;
  display: flex;
  align-items: center;
  gap: 10px;
  height: 15px;
  padding: 0 5px 0 7px;
  background: linear-gradient(90deg, #f0f0f0, #fcfcfc);
}
.docname { margin-left: auto; }

.tabs {
  flex: none;
  display: flex;
  height: 11px;
  padding-left: 1px;
  font-family: "DejaVu Sans", sans-serif;
  font-size: 6px;
  color: #666;
}
.tabs button { padding: 0 3px 0 4px; }
.tabs .active {
  padding: 0 2px;
  border: 1px solid #aaa;
  border-bottom: 0;
  border-radius: 3px 3px 0 0;
  background: #fff;
  color: #111;
}

/* Component ribbon */
.ribbon {
  flex: none;
  display: flex;
  align-items: flex-start;
  gap: 3px;
  height: 106px;
  padding: 1px 2px;
  border-top: 1px solid #b8b8b8;
  border-right: 1px solid #b8b8b8;
  border-top-right-radius: 3px;
  background: linear-gradient(#d8d8d8, #f0f0f0);
}
.panel {
  border: 1px solid #aaa;
  border-radius: 2px;
  background: linear-gradient(#dadada, #eee);
}
.tools { display: flex; gap: 5px; }
.group {
  position: relative;
  display: grid;
  grid-template-rows: repeat(6, 15px);
  grid-auto-columns: 15px;
  grid-auto-flow: column;
}
.group + .group::before {
  content: "";
  position: absolute;
  left: -3px;
  top: 0;
  width: 1px;
  height: 86px;
  background: linear-gradient(#aaa, #ddd);
}
.group button { display: flex; }
.group svg { width: 15px; height: 15px; }
.s { fill: none; stroke: #fff; stroke-width: 1.5; }
.t { fill: none; stroke: #ddd; stroke-width: .9; }
.w { fill: #fff; }
svg .g { fill: #fff; font: bold 9px "Liberation Sans", sans-serif; text-anchor: middle; }
svg .g.small { font-size: 6px; }
svg .g.medium { font-size: 7px; }
svg .g.serif { font-family: "Liberation Serif", serif; }
svg .g.pr { fill: #7a1f9c; }
svg .c { fill: #111; font: bold 5px "Liberation Sans", sans-serif; text-anchor: middle; }
svg .fx { fill: #333; font: italic 7px "Liberation Serif", serif; text-anchor: middle; }
.panel h2 {
  position: relative;
  height: 7px;
  background: linear-gradient(#333, #111);
  color: #fff;
  font: 5px/6px "DejaVu Sans", sans-serif;
  text-align: center;
}
.panel h2 span { position: absolute; right: 2px; top: 0; }

/* Canvas toolbar */
.toolbar {
  flex: none;
  display: flex;
  align-items: center;
  gap: 2px;
  height: 18px;
  padding: 0 0 0 1px;
  border-top: 1px solid #777;
  border-left: 1px solid #777;
  background: linear-gradient(#fff, #f2f2f2);
}
.toolbar button { display: flex; padding: 0; }
.toolbar .ic { width: 13px; height: 13px; }
.toolbar button.on { border: 1px solid #66a8e0; background: #cfe6fa; }
.toolbar select {
  width: 73px;
  height: 12px;
  padding: 0 1px;
  border: 1px solid #999;
  background: #fff url("data:image/svg+xml,%3Csvg xmlns='http://www.w3.org/2000/svg' viewBox='0 0 6 6'%3E%3Cpath d='M1 2 3 4 5 2' fill='none' stroke='%23777' stroke-width='.8'/%3E%3C/svg%3E") right 1px center / 6px no-repeat;
  appearance: none;
  font: 6px "Liberation Sans", sans-serif;
}
.sep { width: 1px; height: 11px; margin: 0 2px; background: #ccc; }
.sep.tight { margin: 0 1px; }
.caret { border: 2px solid transparent; border-top-color: #222; border-bottom: 0; }
.spring { flex: 1; }

/* Canvas */
.canvas {
  position: relative;
  flex: 1;
  overflow: hidden;
  border-left: 1px solid #888;
  background-color: #d4d0c8;
  background-image:
    linear-gradient(90deg, #c5c1ba 1px, transparent 1px),
    linear-gradient(#c5c1ba 1px, transparent 1px);
  background-size: 111px 100%, 100% 37px;
  background-position: 106px 0, 0 7px;
  font-size: 8px;
  line-height: 10px;
}
.canvas > * { position: absolute; margin-left: -1px; }
.canvas .kana { font-size: 7px; }

.outer { background: rgba(181, 156, 236, .85); border: 1px solid #a995d6; }
.inner { background: rgba(231, 226, 248, .9); }
.red { background: #f35a66; }
.crimson { background: rgba(234, 52, 80, .88); }
.a-left { left: -2px; top: 186px; width: 128px; height: 171px; }
.a-main { left: 160px; top: 12px; width: 736px; height: 342px; }
.a-geo { left: 168px; top: 29px; width: 230px; height: 243px; }
.a-rad { left: 564px; top: 20px; width: 208px; height: 326px; }
.r-geo1 { left: 293px; top: 35px; width: 52px; height: 30px; }
.r-geo2 { left: 293px; top: 89px; width: 52px; height: 30px; }
.r-north { left: 418px; top: 21px; width: 142px; height: 31px; }
.r-grid { left: 418px; top: 119px; width: 133px; height: 30px; }
.r-dist { left: 418px; top: 172px; width: 133px; height: 30px; }
.r-run { left: 416px; top: 222px; width: 92px; height: 32px; }

.balloon {
  height: 14px;
  border: 1px solid #666;
  background: linear-gradient(#fff, #ddd);
  line-height: 11px;
  text-align: center;
  white-space: nowrap;
}
.tip::after {
  content: "";
  position: absolute;
  left: 50%;
  top: 12px;
  border: 4px solid transparent;
  border-top-color: #ddd;
  border-bottom: 0;
  transform: translateX(-50%);
}
.b-sun { left: 508px; top: 16px; width: 40px; }
.b-geo1 { left: 298px; top: 18px; width: 40px; }
.b-geo2 { left: 298px; top: 72px; width: 40px; }
.b-north { left: 443px; top: 4px; width: 92px; }
.b-grid { left: 452px; top: 102px; width: 66px; }
.b-dist { left: 426px; top: 155px; width: 117px; }
.b-run { left: 441px; top: 205px; width: 41px; }

.wires { left: 0; top: 0; width: 1024px; height: 401px; fill: none; }
.wire-out { stroke: #4a4358; stroke-width: 4; }
.wire-in { stroke: #b2acbc; stroke-width: 1.4; }
.wire { stroke: #4a4060; stroke-width: 2; }

.node {
  display: flex;
  border: 1px solid #4c4c55;
  border-radius: 2px;
  background: linear-gradient(#d8d8de, #aeaeb9 35%, #8c8c98);
}

/* Connection grips */
.io::before, .io::after, .out::after, .preview li::before, .inputs li::before, .outputs li::after {
  content: "";
  position: absolute;
  top: 50%;
  width: 4px;
  height: 7px;
  margin-top: -4px;
  border: 1px solid #000;
  background: #fff;
}
.io::before, .preview li::before, .inputs li::before { left: -4px; border-right: 0; border-radius: 4px 0 0 4px; }
.io::after, .out::after, .outputs li::after { right: -4px; border-left: 0; border-radius: 0 4px 4px 0; }

.capsule { justify-content: center; align-items: center; height: 16px; white-space: nowrap; }
.n-geo-s1 { left: 175px; top: 42px; width: 87px; }
.n-geo-s2 { left: 176px; top: 96px; width: 87px; }
.n-geo1 { left: 300px; top: 42px; width: 38px; }
.n-geo2 { left: 300px; top: 96px; width: 38px; }

.core {
  display: flex;
  align-items: center;
  justify-content: center;
  width: 19px;
  border: 1px solid #222;
  border-radius: 2px;
  background: linear-gradient(#333, #3c3c3c 90%, #777);
  color: #fff;
  font-size: 9px;
  line-height: 14px;
  writing-mode: vertical-rl;
  transform: rotate(180deg);
}

.preview {
  width: 36px;
  height: 47px;
  border-right: 0;
  background: linear-gradient(#eee, #c4c4c4);
}
.preview ul { flex: 1; display: flex; flex-direction: column; }
.preview li { position: relative; flex: 1; display: flex; align-items: center; justify-content: center; }
.preview::after {
  content: "";
  position: absolute;
  right: -4px;
  top: 0;
  bottom: 0;
  width: 4px;
  background: url("data:image/svg+xml,%3Csvg xmlns='http://www.w3.org/2000/svg' viewBox='0 0 4 5'%3E%3Cpath d='M0 0 3.500 2.500 0 5z' fill='%23e4e4e4'/%3E%3Cpath d='M0 0 3.500 2.500 0 5' fill='none' stroke='%23666' stroke-width='.7'/%3E%3C/svg%3E") 0 0 / 4px 5px repeat-y;
}
.n-prev1 { left: 354px; top: 133px; }
.n-prev2 { left: 852px; top: 143px; }

.swatch { width: 66px; height: 16px; align-items: stretch; }
.swatch span { width: 35px; text-align: center; line-height: 13px; }
.swatch button { flex: 1; border-left: 1px solid #333; }
.gray { background: #777; }
.black { background: #000; }
.n-sw1 { left: 272px; top: 159px; }
.n-sw2 { left: 777px; top: 174px; }

.slider { height: 15px; background: linear-gradient(#fafafa, #d8d8d8); }
.slider label { width: 17px; background: linear-gradient(#b8b8c2, #8c8c98); border-right: 1px solid #666; text-align: center; line-height: 13px; }
.rail { position: relative; flex: 1; padding: 0 2px; }
.rail input {
  display: block;
  width: 100%;
  height: 13px;
  margin: 0;
  appearance: none;
  background: repeating-linear-gradient(90deg, #bbb 0 1px, transparent 1px 14px) right 6px top 5px / 70px 3px no-repeat, linear-gradient(#c8c8c8, #c8c8c8) right 6px top 7px / 70px 1px no-repeat;
}
.rail input::-webkit-slider-thumb {
  appearance: none;
  width: 6px;
  height: 6px;
  border: 2px solid #000;
  border-radius: 50%;
  background: #fff;
}
.rail output { position: absolute; top: 0; line-height: 11px; }
.n-north { left: 426px; top: 29px; width: 126px; }
.n-grid { left: 426px; top: 127px; width: 118px; }
.n-dist { left: 426px; top: 180px; width: 118px; }

.toggle { width: 77px; height: 17px; }
.toggle span { flex: 1; text-align: center; line-height: 14px; }
.toggle button {
  width: 36px;
  border: 1px solid #222;
  border-radius: 2px;
  background: linear-gradient(#777, #444);
  color: #fff;
  font: 10px/12px "Liberation Mono", monospace;
}
.n-run { left: 424px; top: 229px; }

.component { background: linear-gradient(#e8e8ee, #a9a9b6 9px, #858592); }
.component ul { flex: 1; display: flex; flex-direction: column; padding: 1px 0; }
.component li { position: relative; flex: 1; display: flex; align-items: center; white-space: nowrap; }
.inputs li { justify-content: flex-end; padding-right: 3px; }
.outputs li { padding-left: 2px; }
.inputs .rule::after, .outputs .rule::before {
  content: "";
  width: 70px;
  height: 1px;
  margin-top: 5px;
  background: #444;
}
.inputs .rule::before, .outputs .rule::after { flex: none; }
.down { background: url("data:image/svg+xml,%3Csvg xmlns='http://www.w3.org/2000/svg' viewBox='0 0 10 10'%3E%3Crect x='.5' y='.5' width='9' height='9' rx='1' fill='%23ddd' stroke='%23666'/%3E%3Cpath d='M5 2V7.500M2.500 5 5 7.500 7.500 5' fill='none' stroke='%23555' stroke-width='1.200'/%3E%3C/svg%3E") 1px center / 10px no-repeat; }
.n-rad { left: 571px; top: 26px; width: 193px; height: 211px; }
.n-rad .inputs { flex: none; width: 90px; }
.n-leg { left: -40px; top: 199px; width: 160px; height: 152px; }
.n-leg .inputs { flex: none; width: 92px; }

.foot {
  border-radius: 0 0 2px 2px;
  background: #222;
  color: #ddd;
  text-align: center;
}
.f-rad { left: 576px; top: 236px; width: 182px; height: 22px; }
.f-leg { left: -26px; top: 350px; width: 140px; height: 22px; }
.stub { left: -6px; top: 387px; width: 11px; height: 15px; }

.note {
  flex-direction: column;
  width: 119px;
  height: 75px;
  background: #fffa5a;
}
.note h3 {
  height: 13px;
  border-bottom: 1px solid #555;
  background: #c9c545;
  box-shadow: 0 1px 3px #a8a430;
  font-size: 7px;
  line-height: 12px;
  text-align: center;
}
.note p {
  flex: 1;
  align-content: center;
  font: 5px/6px "Liberation Mono", "Noto Sans CJK JP", monospace;
  text-align: center;
  white-space: nowrap;
  color: #000;
}
.n-note1 { left: 273px; top: 191px; }
.n-note2 { left: 646px; top: 265px; }

.tooltip {
  left: 640px;
  top: 191px;
  width: 320px;
  height: 64px;
  border: 1px solid #4a4a30;
  background: #ffffc4;
  color: #111;
}
.tooltip header { display: flex; align-items: center; gap: 6px; height: 17px; padding-left: 2px; background: #ffd060; font-size: 8px; }
.tooltip header svg { width: 14px; height: 14px; }
.tooltip p { padding: 3px 2px; font: 5px/6px "DejaVu Sans", sans-serif; white-space: nowrap; }
.tooltip pre {
  margin: 2px 1px 0;
  padding: 1px 3px;
  border: 1px solid #77774a;
  background: #e9e8ae;
  font: 6px/6px "Liberation Mono", monospace;
}
.compass { right: 5px; bottom: 4px; width: 28px; height: 24px; }

.status { flex: none; display: flex; align-items: center; gap: 2px; height: 13px; padding: 0 15px 0 2px; }
.status svg { width: 9px; height: 9px; }
.version { margin-left: auto; color: #888; }
```
